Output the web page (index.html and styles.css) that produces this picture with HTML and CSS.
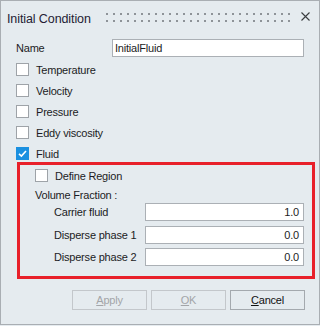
FILE: index.html
```html
<!DOCTYPE html>
<html lang="en">

<head>
    <meta charset="UTF-8">
    <meta name="viewport" content="width=device-width, initial-scale=1.0">
    <title>Initial Condition</title>
    <link rel="stylesheet" href="styles.css">
</head>

<body>
    <div class="window">
        <div class="titlebar">
            <span class="title">Initial Condition</span>
            <svg class="grip" width="184" height="9">
                <defs>
                    <pattern id="dots" width="7" height="7" patternUnits="userSpaceOnUse">
                        <rect width="2" height="2" fill="#8e9398" />
                    </pattern>
                </defs>
                <rect width="184" height="9" fill="url(#dots)" />
            </svg>
            <svg class="close" width="9" height="9" viewBox="0 0 9 9">
                <path d="M0.5 0.5 L8.5 8.5 M8.5 0.5 L0.5 8.5" stroke="#3a3d40" stroke-width="1.1" />
            </svg>
        </div>

        <div class="name-row">
            <span class="name-label">Name</span>
            <div class="field name-field">InitialFluid</div>
        </div>

        <div class="checks">
            <div class="check-row"><span class="box"></span><span>Temperature</span></div>
            <div class="check-row"><span class="box"></span><span>Velocity</span></div>
            <div class="check-row"><span class="box"></span><span>Pressure</span></div>
            <div class="check-row"><span class="box"></span><span>Eddy viscosity</span></div>
            <div class="check-row">
                <span class="box checked">
                    <svg width="13" height="13" viewBox="0 0 13 13">
                        <path d="M3 6.8 L5.4 9 L10 4" fill="none" stroke="#fff" stroke-width="1.6" />
                    </svg>
                </span>
                <span>Fluid</span>
            </div>
        </div>

        <div class="fluid-box">
            <div class="check-row inner"><span class="box"></span><span>Define Region</span></div>
            <div class="vf-label">Volume Fraction :</div>
            <div class="vf-list">
                <div class="vf-row">
                    <span class="vf-name">Carrier fluid</span>
                    <div class="field num">1.0</div>
                </div>
                <div class="vf-row">
                    <span class="vf-name">Disperse phase 1</span>
                    <div class="field num">0.0</div>
                </div>
                <div class="vf-row">
                    <span class="vf-name">Disperse phase 2</span>
                    <div class="field num">0.0</div>
                </div>
            </div>
        </div>

        <div class="buttons">
            <div class="btn disabled"><u>A</u>pply</div>
            <div class="btn disabled"><u>O</u>K</div>
            <div class="btn"><u>C</u>ancel</div>
        </div>
    </div>
</body>

</html>
```

FILE: styles.css
```css
* {
    box-sizing: border-box;
}

html,
body {
    margin: 0;
    padding: 0;
    background-color: #e5ebef;
}

body {
    font-family: "Liberation Sans", Arial, sans-serif;
    font-size: 11px;
    letter-spacing: -0.2px;
    color: #1c1c24;
}

.window {
    width: 320px;
    height: 325px;
    border: 1px solid #a9aeb3;
    background-color: #e5ebef;
}

.titlebar {
    height: 36px;
    display: flex;
    align-items: center;
    padding: 0 9px 0 6px;
}

.title {
    font-size: 12.5px;
    letter-spacing: -0.1px;
    color: #241c34;
}

.grip {
    display: block;
    margin-left: auto;
    margin-top: -3px;
}

.close {
    display: block;
    margin-left: 11px;
    margin-top: -5px;
}

.name-row {
    margin-top: 2px;
    height: 18px;
    display: flex;
    align-items: center;
    padding-left: 15px;
}

.name-label {
    width: 96px;
}

.field {
    height: 18px;
    border: 1px solid #abb0b5;
    background-color: #fff;
    display: flex;
    align-items: center;
    padding: 0 2px;
}

.name-field {
    width: 192px;
}

.checks {
    margin-top: 4px;
    display: flex;
    flex-direction: column;
    gap: 4px;
}

.check-row {
    height: 17px;
    display: flex;
    align-items: center;
    padding-left: 15px;
}

.box {
    width: 13px;
    height: 13px;
    border: 1px solid #9ea3a8;
    background-color: #fff;
    margin-right: 7px;
    display: block;
}

.box.checked {
    border: none;
    background-color: #1a90e0;
}

.box svg {
    display: block;
}

.fluid-box {
    margin-left: 16px;
    width: 298px;
    height: 117px;
    border: 3px solid #e8202a;
    padding-top: 2px;
}

.check-row.inner {
    padding-left: 15px;
}

.vf-label {
    margin-top: 2px;
    height: 17px;
    display: flex;
    align-items: center;
    padding-left: 15px;
}

.vf-list {
    display: flex;
    flex-direction: column;
    gap: 4.5px;
}

.vf-row {
    height: 18px;
    display: flex;
    align-items: center;
    padding-left: 34px;
}

.vf-name {
    width: 91px;
}

.num {
    width: 159px;
    justify-content: flex-end;
    padding-right: 4px;
}

.buttons {
    margin-top: 11px;
    display: flex;
    justify-content: flex-end;
    gap: 4px;
    padding-right: 14px;
}

.btn {
    width: 75px;
    height: 20px;
    border: 1px solid #a4a9ae;
    display: flex;
    align-items: center;
    justify-content: center;
    color: #111;
}

.btn.disabled {
    border-color: #c3c7cb;
    color: #a3a5a8;
}
```
